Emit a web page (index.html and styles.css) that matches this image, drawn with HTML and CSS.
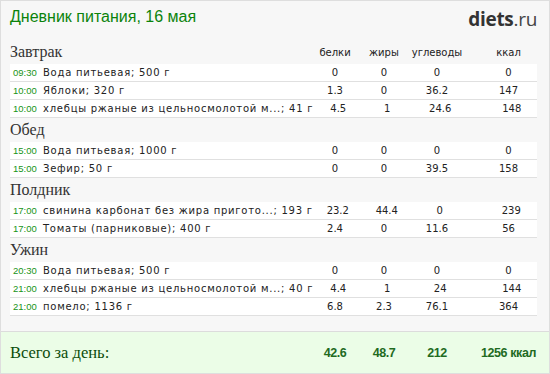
FILE: index.html
```html
<!DOCTYPE html>
<html lang="ru">
<head>
<meta charset="utf-8">
<title>Дневник питания</title>
<link rel="stylesheet" href="styles.css">
</head>
<body>
<div class="page">
  <header class="top">
    <h1 class="title">Дневник питания, 16 мая</h1>
    <div class="logo"><b>diets</b>.ru</div>
  </header>

  <section class="meal">
    <div class="meal-head">
      <h2 class="meal-name">Завтрак</h2>
      <span class="col">белки</span><span class="col">жиры</span><span class="col">углеводы</span><span class="col kcal">ккал</span>
    </div>
    <div class="row"><span class="name"><i class="time">09:30</i>Вода питьевая; 500 г</span><span class="col">0</span><span class="col">0</span><span class="col">0</span><span class="col kcal">0</span></div>
    <div class="row"><span class="name"><i class="time">10:00</i>Яблоки; 320 г</span><span class="col">1.3</span><span class="col">0</span><span class="col">36.2</span><span class="col kcal">147</span></div>
    <div class="row"><span class="name"><i class="time">10:00</i>хлебцы ржаные из цельносмолотой м...; 41 г</span><span class="col">4.5</span><span class="col">1</span><span class="col">24.6</span><span class="col kcal">148</span></div>
  </section>

  <section class="meal">
    <div class="meal-head"><h2 class="meal-name">Обед</h2></div>
    <div class="row"><span class="name"><i class="time">15:00</i>Вода питьевая; 1000 г</span><span class="col">0</span><span class="col">0</span><span class="col">0</span><span class="col kcal">0</span></div>
    <div class="row"><span class="name"><i class="time">15:00</i>Зефир; 50 г</span><span class="col">0</span><span class="col">0</span><span class="col">39.5</span><span class="col kcal">158</span></div>
  </section>

  <section class="meal">
    <div class="meal-head"><h2 class="meal-name">Полдник</h2></div>
    <div class="row"><span class="name"><i class="time">17:00</i>свинина карбонат без жира пригото...; 193 г</span><span class="col">23.2</span><span class="col">44.4</span><span class="col">0</span><span class="col kcal">239</span></div>
    <div class="row"><span class="name"><i class="time">17:00</i>Томаты (парниковые); 400 г</span><span class="col">2.4</span><span class="col">0</span><span class="col">11.6</span><span class="col kcal">56</span></div>
  </section>

  <section class="meal">
    <div class="meal-head"><h2 class="meal-name">Ужин</h2></div>
    <div class="row"><span class="name"><i class="time">20:30</i>Вода питьевая; 500 г</span><span class="col">0</span><span class="col">0</span><span class="col">0</span><span class="col kcal">0</span></div>
    <div class="row"><span class="name"><i class="time">21:00</i>хлебцы ржаные из цельносмолотой м...; 40 г</span><span class="col">4.4</span><span class="col">1</span><span class="col">24</span><span class="col kcal">144</span></div>
    <div class="row"><span class="name"><i class="time">21:00</i>помело; 1136 г</span><span class="col">6.8</span><span class="col">2.3</span><span class="col">76.1</span><span class="col kcal">364</span></div>
  </section>

  <footer class="total">
    <span class="total-label">Всего за день:</span>
    <span class="col">42.6</span><span class="col">48.7</span><span class="col">212</span><span class="col kcal">1256 ккал</span>
  </footer>
</div>
</body>
</html>
```

FILE: styles.css
```css
* { box-sizing: border-box; }
html, body { margin: 0; padding: 0; }
body { width: 550px; height: 374px; overflow: hidden; background: #fff; }

.page {
  width: 550px;
  height: 374px;
  border: 1px solid #dedede;
  background: #f7f7f7;
  display: flex;
  flex-direction: column;
  font-family: "DejaVu Sans", Verdana, sans-serif;
  color: #222;
}

.top {
  height: 39px;
  display: flex;
  align-items: flex-start;
  justify-content: space-between;
  padding: 6px 12px 0 9px;
}
.title {
  margin: 0;
  font-family: "Liberation Sans", Arial, sans-serif;
  font-weight: normal;
  font-size: 16px;
  line-height: 20px;
  color: #0b830b;
}
.logo {
  font-family: "Open Sans", "DejaVu Sans", sans-serif;
  font-size: 19px;
  line-height: 22px;
  color: #444;
  margin-top: 1px;
  letter-spacing: -0.3px;
}
.logo b { font-weight: 700; color: #333; }

.meal { margin: 0 12px 0 9px; }

.meal-head, .row, .total {
  display: grid;
  grid-template-columns: 1fr 50px 48px 58px 71px;
}

.meal-head {
  height: 24px;
  align-items: end;
  padding-bottom: 3px;
}
.meal-name {
  margin: 0;
  font-family: "Liberation Serif", "Times New Roman", serif;
  font-weight: normal;
  font-size: 16px;
  line-height: 18px;
  color: #333;
}
.meal-head .col {
  font-size: 10px;
  line-height: 14px;
  color: #222;
  padding-bottom: 1px;
}

.col { text-align: center; white-space: nowrap; }
.kcal { padding-left: 14px; }

.row {
  height: 18px;
  background: #fff;
  border-bottom: 1px solid #e0e0e0;
  align-items: center;
  font-size: 10px;
  line-height: 17px;
}
.name {
  white-space: nowrap;
  overflow: visible;
  padding-left: 3px;
  letter-spacing: 0.75px;
}
.time {
  font-style: normal;
  font-family: "Liberation Sans", Arial, sans-serif;
  font-size: 9.5px;
  letter-spacing: 0;
  color: #179417;
  display: inline-block;
  width: 30px;
}

.total {
  margin-top: auto;
  height: 42px;
  border-top: 1px solid #dcdcdc;
  background: #ebfde7;
  align-items: center;
  padding: 0 12px 0 9px;
  font-family: "Liberation Sans", Arial, sans-serif;
  font-weight: bold;
  font-size: 12.5px;
  color: #1f6b1f;
}
.total-label {
  font-family: "Liberation Serif", "Times New Roman", serif;
  font-weight: normal;
  font-size: 16.5px;
  color: #0c4d0c;
}
.total .col { letter-spacing: -0.4px; }
```
